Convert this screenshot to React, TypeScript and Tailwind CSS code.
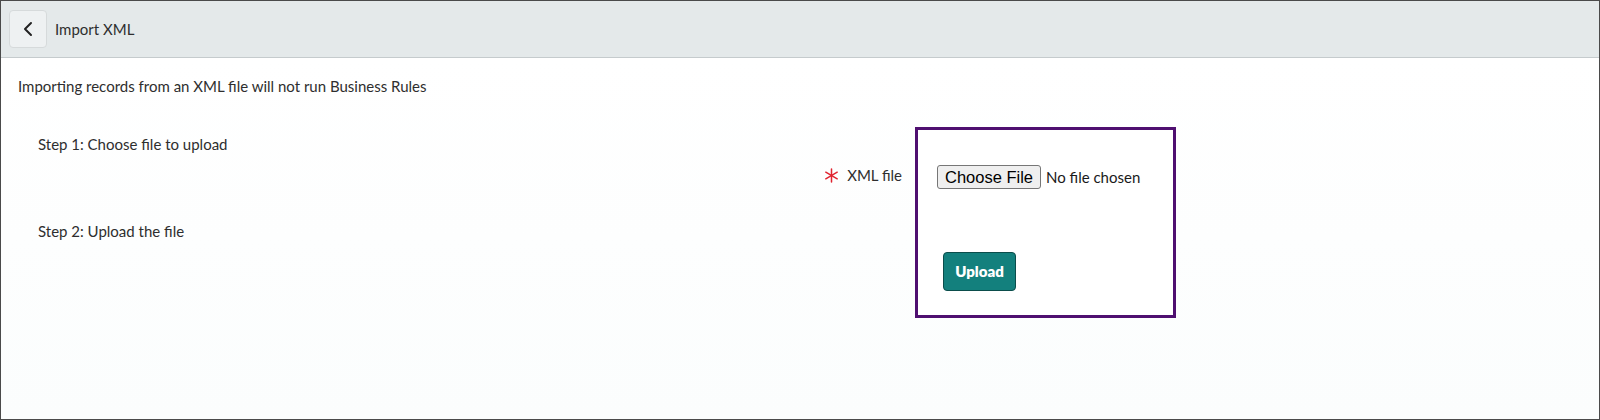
import { ChevronLeft } from "lucide-react";

export default function App() {
  return (
    <div className="w-[1600px] h-[420px] border border-[#4a4a4a] bg-white text-[#2e2e2e] font-['Lato',sans-serif] text-[15px] overflow-hidden flex flex-col">
      <Header />
      <div className="flex-1 bg-gradient-to-b from-white to-[#fbfdfd]">
        <p className="pl-[17px] pt-[18px] leading-5">
          Importing records from an XML file will not run Business Rules
        </p>
        <div className="flex mt-[31px] pl-[17px]">
          <div className="w-[780px] pl-[20px] pt-[7px]">
            <div className="leading-5">Step 1: Choose file to upload</div>
            <div className="leading-5 mt-[67px]">Step 2: Upload the file</div>
          </div>
          <div className="w-[104px] flex justify-end items-center h-5 mt-[38px]">
            <Asterisk />
            <span className="leading-5 ml-[8px]">XML file</span>
          </div>
          <UploadBox />
        </div>
      </div>
    </div>
  );
}

function Asterisk() {
  return (
    <svg width="15" height="15" viewBox="0 0 16 16" className="text-[#e0232f]">
      <g stroke="currentColor" strokeWidth="1.6" strokeLinecap="round">
        <line x1="8" y1="1" x2="8" y2="15" />
        <line x1="1.9" y1="4.5" x2="14.1" y2="11.5" />
        <line x1="1.9" y1="11.5" x2="14.1" y2="4.5" />
      </g>
    </svg>
  );
}

function Header() {
  return (
    <div className="h-[57px] shrink-0 bg-[#e4e9ea] border-b border-[#c5cbcd] flex items-center pl-[8px]">
      <button className="w-[38px] h-[38px] rounded-[4px] bg-[#eef1f2] border border-[#d6dadb] flex items-center justify-center text-[#222]">
        <ChevronLeft size={24} strokeWidth={2} />
      </button>
      <span className="ml-[8px] text-[15px]">Import XML</span>
    </div>
  );
}

function UploadBox() {
  return (
    <div className="ml-[13px] w-[261px] h-[191px] border-[3px] border-[#4f0f70] bg-white pl-[19px] pt-[35px]">
      <div className="flex items-center">
        <button className="h-[24px] w-[104px] bg-[#efefef] border border-[#767676] rounded-[3px] text-[16.5px] text-black font-['Liberation_Sans',Arial,sans-serif] leading-none">
          Choose File
        </button>
        <span className="ml-[5px] text-[15px] text-[#1a1a1a]">No file chosen</span>
      </div>
      <button className="mt-[63px] ml-[6px] w-[73px] h-[39px] rounded-[4px] bg-[#13807d] border border-[#0b4d4b] text-white font-extrabold text-[15px]">
        Upload
      </button>
    </div>
  );
}
